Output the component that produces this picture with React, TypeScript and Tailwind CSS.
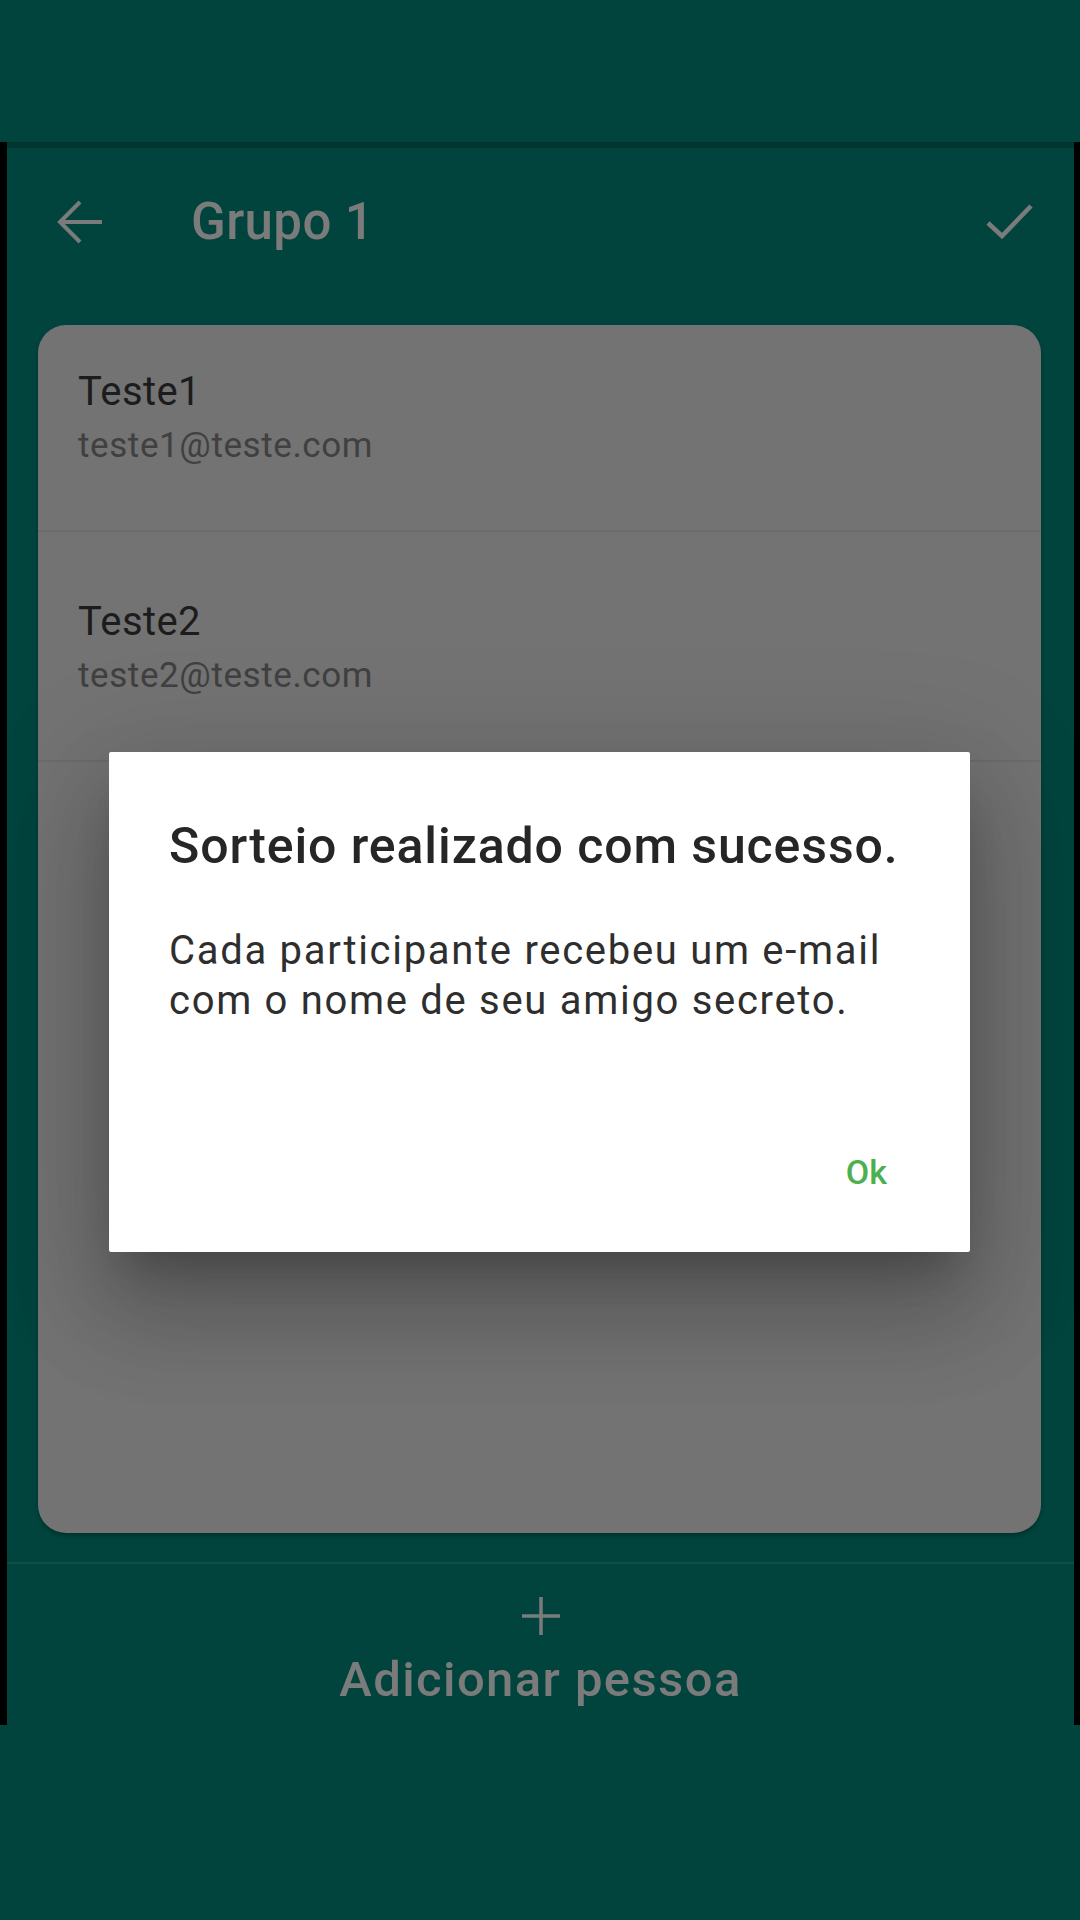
import React from 'react';

const people = [
  { name: 'Teste1', email: 'teste1@teste.com' },
  { name: 'Teste2', email: 'teste2@teste.com' },
];

const BackIcon = () => (
  <svg width="46" height="46" viewBox="0 0 46 46" fill="none" stroke="#7b7b7b" strokeWidth="4">
    <path d="M3 23H45" />
    <path d="M23 3L3 23L23 43" />
  </svg>
);

const CheckIcon = () => (
  <svg width="48" height="38" viewBox="0 0 48 38" fill="none" stroke="#7b7b7b" strokeWidth="4.5">
    <path d="M2 20L16 33L45 3" />
  </svg>
);

const PlusIcon = () => (
  <svg width="40" height="40" viewBox="0 0 40 40" fill="none" stroke="#7b7b7b" strokeWidth="3.5">
    <path d="M20 1V39" />
    <path d="M1 20H39" />
  </svg>
);

const App: React.FC = () => {
  return (
    <div
      className="relative w-[1080px] h-[1920px] bg-[#01443d] flex flex-col overflow-hidden"
      style={{ fontFamily: 'Roboto, "Noto Sans", sans-serif' }}
    >
      <div className="h-[142px] shrink-0 bg-[#01443d]" />

      <div className="h-[1583px] shrink-0 flex flex-col border-l-[7px] border-r-[6px] border-black bg-[#01443d]">
        <div className="h-[6px] bg-[#013630]" />

        <div className="h-[148px] flex items-center pl-[50px] pr-[40px]">
          <BackIcon />
          <span className="ml-[88px] text-[51px] leading-[56px] font-medium tracking-[0.4px] text-[#7b7b7b]">Grupo 1</span>
          <div className="ml-auto">
            <CheckIcon />
          </div>
        </div>

        <div className="mt-[29px] ml-[31px] mr-[33px] h-[1208px] rounded-[28px] bg-[#737373] overflow-hidden shadow-[0_3px_4px_rgba(0,0,0,0.25)]">
          {people.map((p, i) => (
            <div
              key={p.email}
              className={`px-[40px] pb-[64px] border-b-2 border-[#6b6b6b] ${i === 0 ? 'pt-[43px]' : 'pt-[66px]'}`}
            >
              <div className="text-[40px] leading-[48px] tracking-[0.4px] text-[#1c1c1c]">{p.name}</div>
              <div className="mt-[10px] text-[35px] leading-[40px] tracking-[0.6px] text-[#404040]">{p.email}</div>
            </div>
          ))}
        </div>

        <div className="mt-[29px] h-[2px] bg-[#0e4f48]" />

        <div className="flex flex-col items-center pt-[32px]">
          <PlusIcon />
          <span className="mt-[16px] text-[49px] leading-[56px] font-medium tracking-[1.4px] text-[#7b7b7b]">Adicionar pessoa</span>
        </div>
      </div>

      <div className="flex-1 bg-[#01443d]" />

      {/* dialog */}
      <div className="absolute left-[109px] top-[752px] w-[861px] h-[500px] bg-white rounded-[2px] flex flex-col pl-[60px] pr-[83px] pt-[66px] shadow-[0_60px_90px_10px_rgba(0,0,0,0.16),0_24px_120px_20px_rgba(0,0,0,0.12),0_30px_40px_-18px_rgba(0,0,0,0.22)]">
        <div className="text-[50px] leading-[56px] font-medium tracking-[0.9px] text-[#262626] whitespace-nowrap">
          Sorteio realizado com sucesso.
        </div>
        <div className="mt-[52px] text-[40px] leading-[50px] tracking-[1.7px] text-[#2e2e2e] whitespace-nowrap">
          Cada participante recebeu um e-mail
          <br />
          com o nome de seu amigo secreto.
        </div>
        <div className="mt-[126px] flex justify-end">
          <span className="text-[34px] leading-[40px] font-medium text-[#4caf50]">Ok</span>
        </div>
      </div>
    </div>
  );
};

export default App;
